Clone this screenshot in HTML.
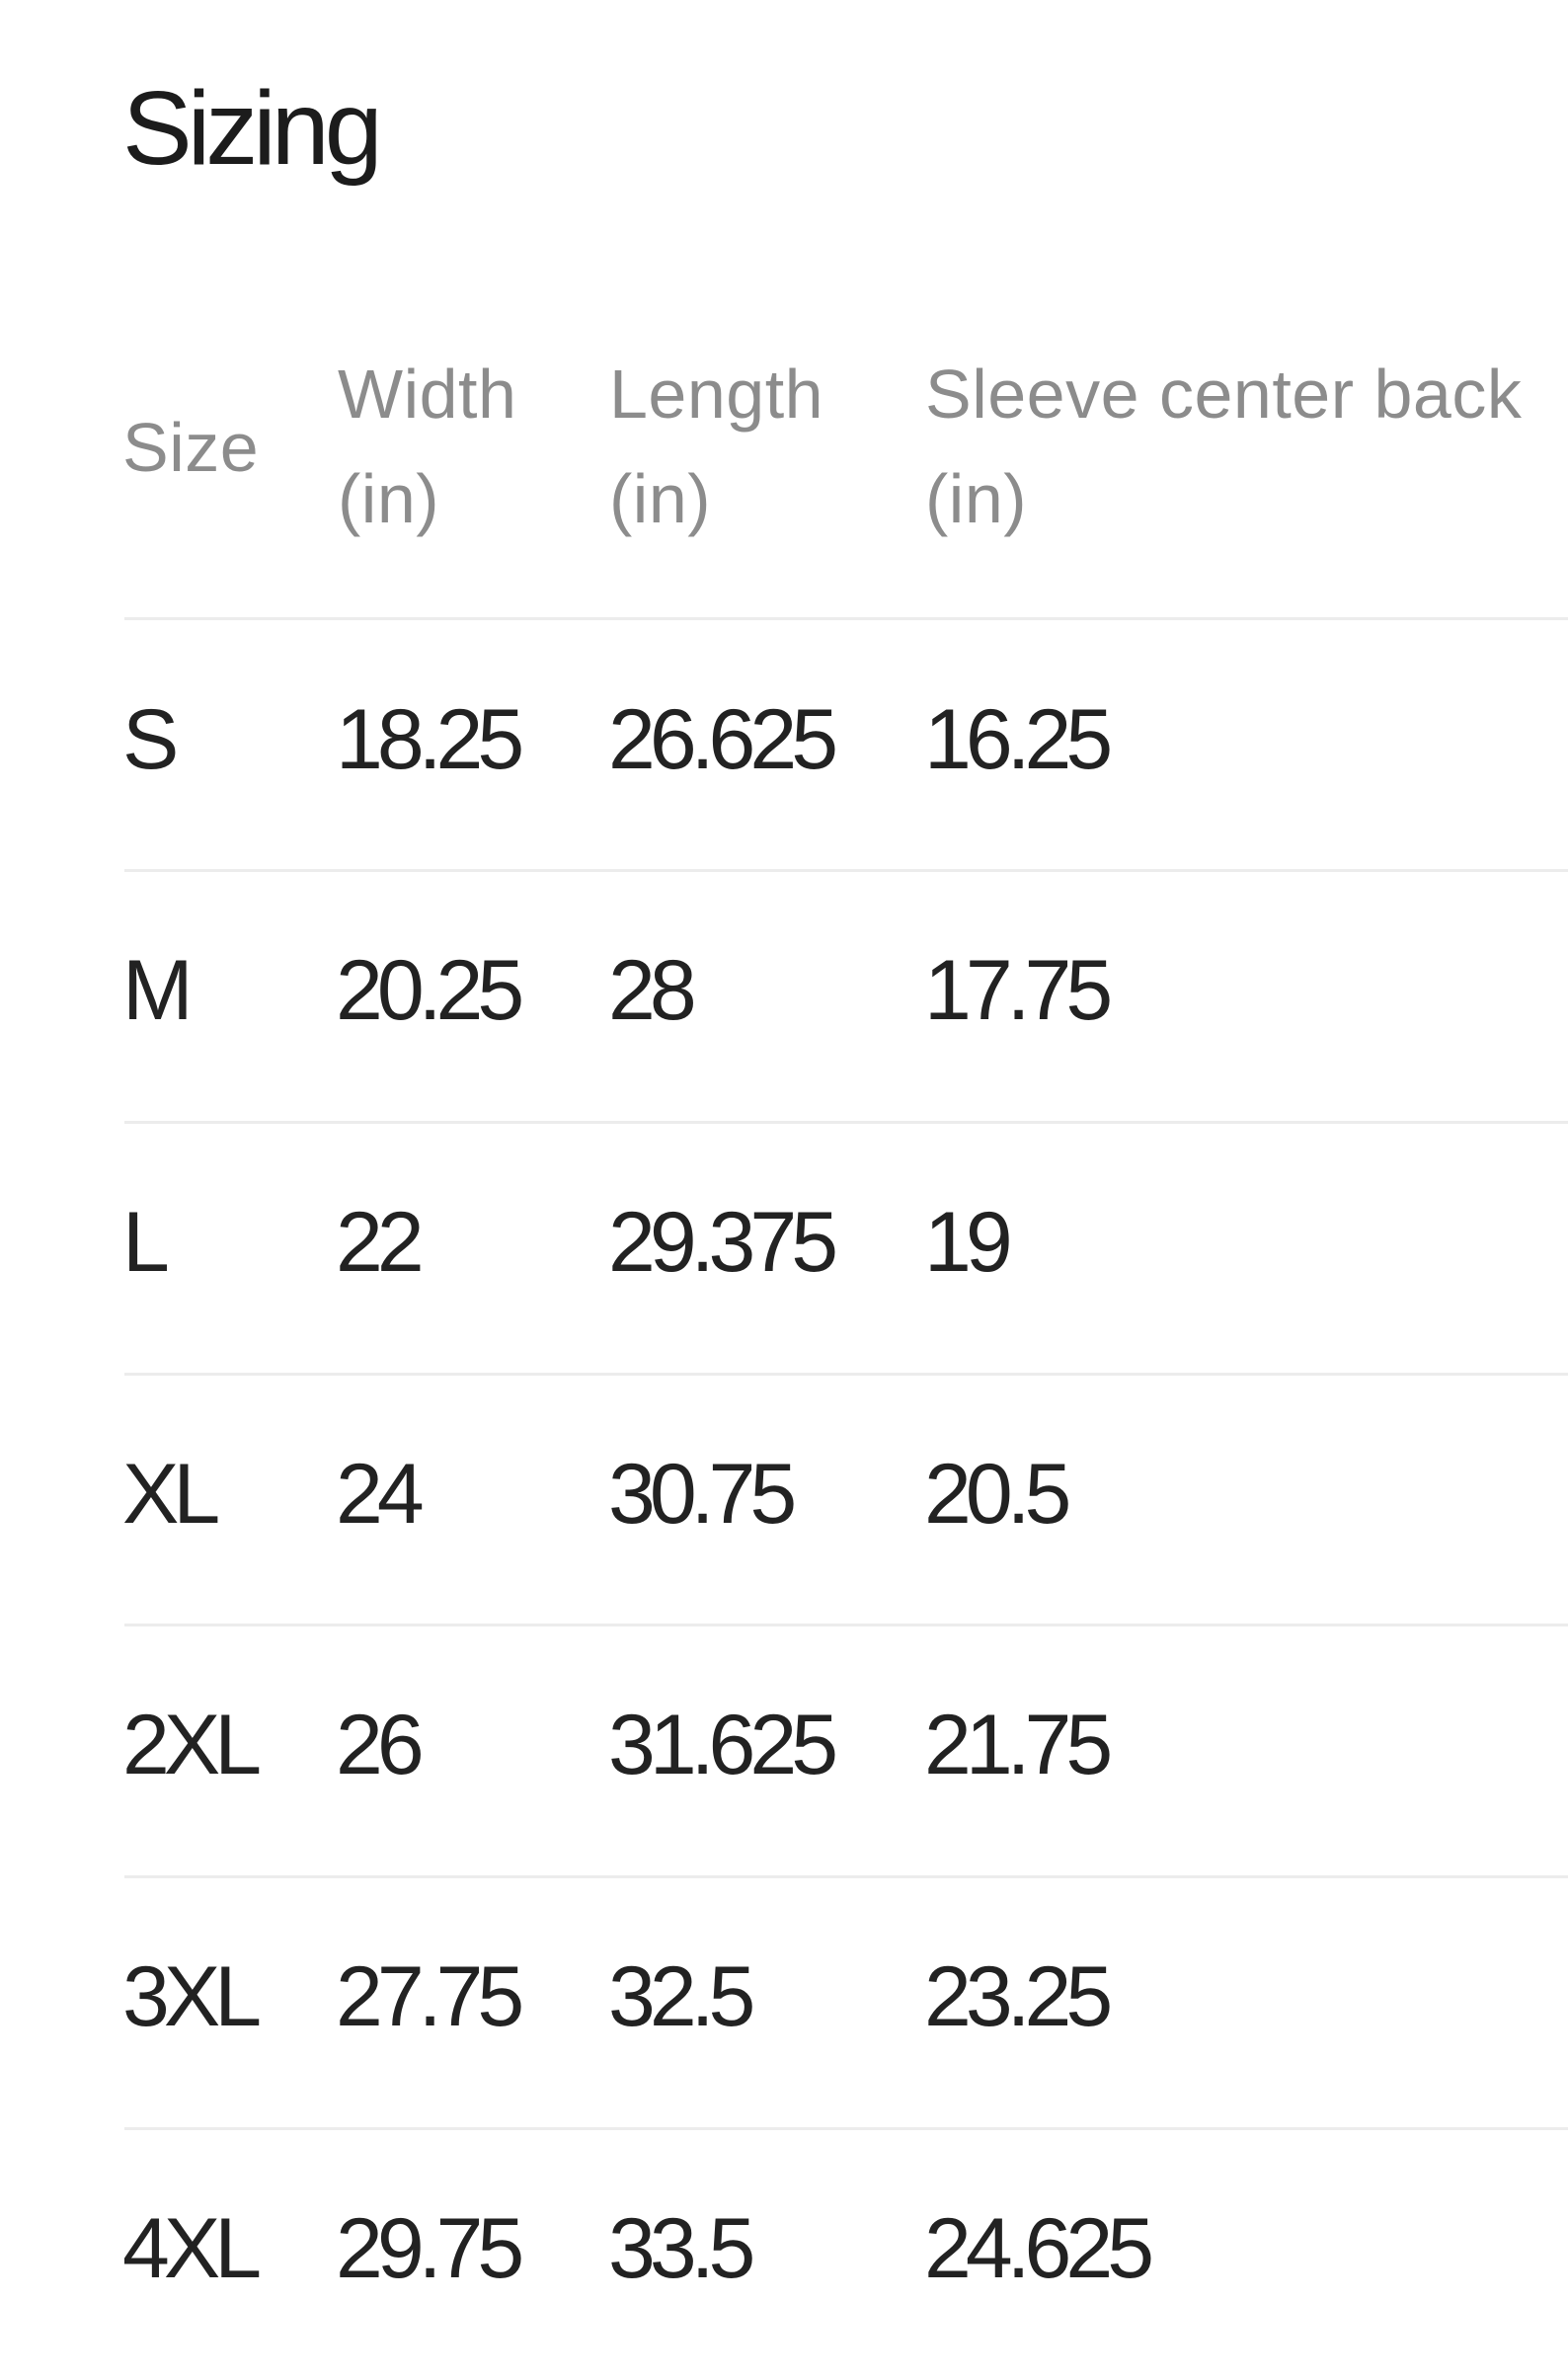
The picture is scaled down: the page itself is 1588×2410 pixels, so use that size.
<!DOCTYPE html>
<html><head><meta charset="utf-8"><style>
html,body{margin:0;padding:0;background:#fff;}
body{width:1588px;height:2410px;position:relative;overflow:hidden;font-family:"Liberation Sans",sans-serif;}
.t{position:absolute;white-space:nowrap;}
.title{left:124px;top:70px;font-size:106px;color:#1c1c1c;letter-spacing:-5px;}
.h{font-size:70px;color:#8c8c8c;letter-spacing:0.5px;line-height:106px;}
.c{font-size:86px;color:#222;letter-spacing:-6px;line-height:100px;}
.line{position:absolute;left:126px;right:0;height:3px;background:#ececec;}
</style></head><body>
<div class="t title">Sizing</div>
<div class="t h" style="left:124px;top:400px">Size</div>
<div class="t h" style="left:342px;top:346px">Width<br>(in)</div>
<div class="t h" style="left:617px;top:346px">Length<br>(in)</div>
<div class="t h" style="left:937px;top:346px">Sleeve center back<br>(in)</div>

<div class="line" style="top:625px"></div>
<div class="t c" style="left:124px;top:699px">S</div>
<div class="t c" style="left:340px;top:699px">18.25</div>
<div class="t c" style="left:616px;top:699px">26.625</div>
<div class="t c" style="left:936px;top:699px">16.25</div>

<div class="line" style="top:880px"></div>
<div class="t c" style="left:124px;top:953px">M</div>
<div class="t c" style="left:340px;top:953px">20.25</div>
<div class="t c" style="left:616px;top:953px">28</div>
<div class="t c" style="left:936px;top:953px">17.75</div>

<div class="line" style="top:1135px"></div>
<div class="t c" style="left:124px;top:1208px">L</div>
<div class="t c" style="left:340px;top:1208px">22</div>
<div class="t c" style="left:616px;top:1208px">29.375</div>
<div class="t c" style="left:936px;top:1208px">19</div>

<div class="line" style="top:1390px"></div>
<div class="t c" style="left:124px;top:1463px">XL</div>
<div class="t c" style="left:340px;top:1463px">24</div>
<div class="t c" style="left:616px;top:1463px">30.75</div>
<div class="t c" style="left:936px;top:1463px">20.5</div>

<div class="line" style="top:1644px"></div>
<div class="t c" style="left:124px;top:1717px">2XL</div>
<div class="t c" style="left:340px;top:1717px">26</div>
<div class="t c" style="left:616px;top:1717px">31.625</div>
<div class="t c" style="left:936px;top:1717px">21.75</div>

<div class="line" style="top:1899px"></div>
<div class="t c" style="left:124px;top:1972px">3XL</div>
<div class="t c" style="left:340px;top:1972px">27.75</div>
<div class="t c" style="left:616px;top:1972px">32.5</div>
<div class="t c" style="left:936px;top:1972px">23.25</div>

<div class="line" style="top:2154px"></div>
<div class="t c" style="left:124px;top:2227px">4XL</div>
<div class="t c" style="left:340px;top:2227px">29.75</div>
<div class="t c" style="left:616px;top:2227px">33.5</div>
<div class="t c" style="left:936px;top:2227px">24.625</div>
</body></html>
